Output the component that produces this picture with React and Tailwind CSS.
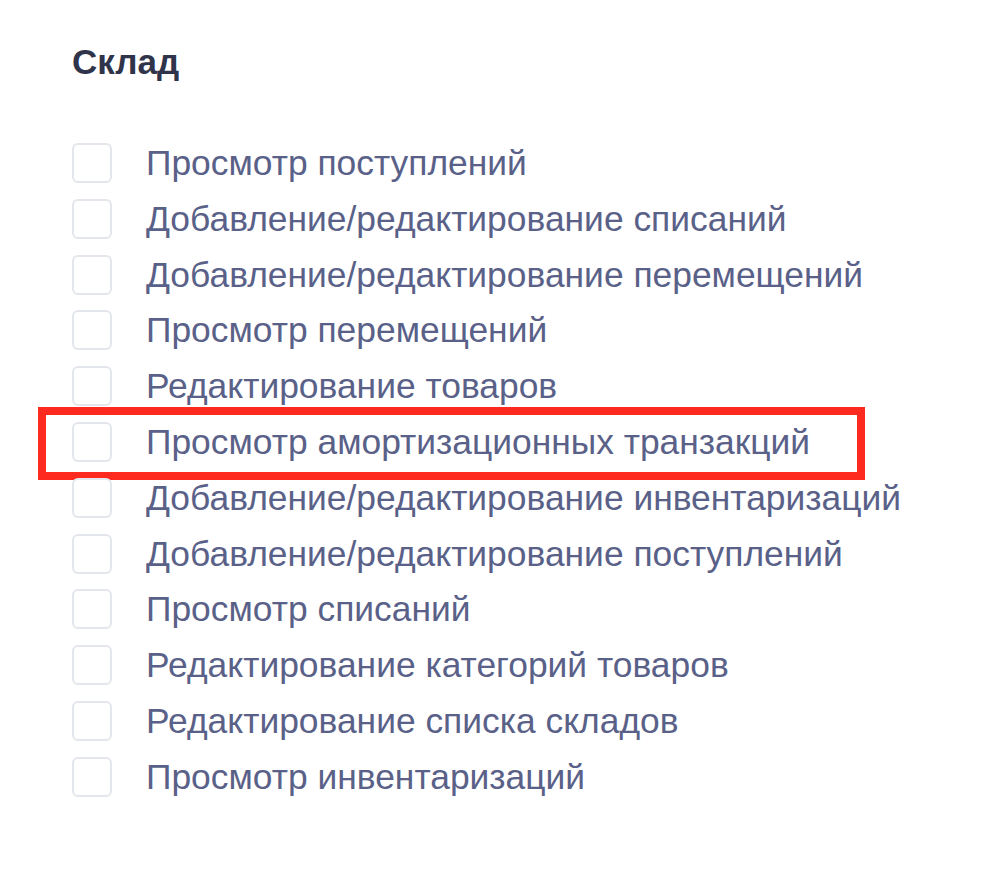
const items = [
  "Просмотр поступлений",
  "Добавление/редактирование списаний",
  "Добавление/редактирование перемещений",
  "Просмотр перемещений",
  "Редактирование товаров",
  "Просмотр амортизационных транзакций",
  "Добавление/редактирование инвентаризаций",
  "Добавление/редактирование поступлений",
  "Просмотр списаний",
  "Редактирование категорий товаров",
  "Редактирование списка складов",
  "Просмотр инвентаризаций",
];

const App = () => {
  return (
    <div
      className="w-[994px] h-[876px] bg-white pl-[72px] pt-[42px]"
      style={{ fontFamily: '"Liberation Sans", Arial, sans-serif' }}
    >
      <span className="block text-[35px] leading-[40px] font-bold text-[#30344a]">
        Склад
      </span>
      <div className="flex flex-col gap-[15.8px] mt-[61px]">
        {items.map((item, i) => (
          <label key={item} className="relative flex items-center gap-[34px]">
            <span className="w-[40px] h-[40px] shrink-0 rounded-[6px] border-2 border-[#e3e6ec] bg-white"></span>
            <span className="text-[35.4px] leading-[40px] text-[#5a6188] whitespace-nowrap">
              {item}
            </span>
            {i === 5 && (
              <span className="absolute left-[-34px] top-[-15px] w-[827px] h-[73px] border-[8px] border-[#ff2a1f] pointer-events-none"></span>
            )}
          </label>
        ))}
      </div>
    </div>
  );
};

export default App;
